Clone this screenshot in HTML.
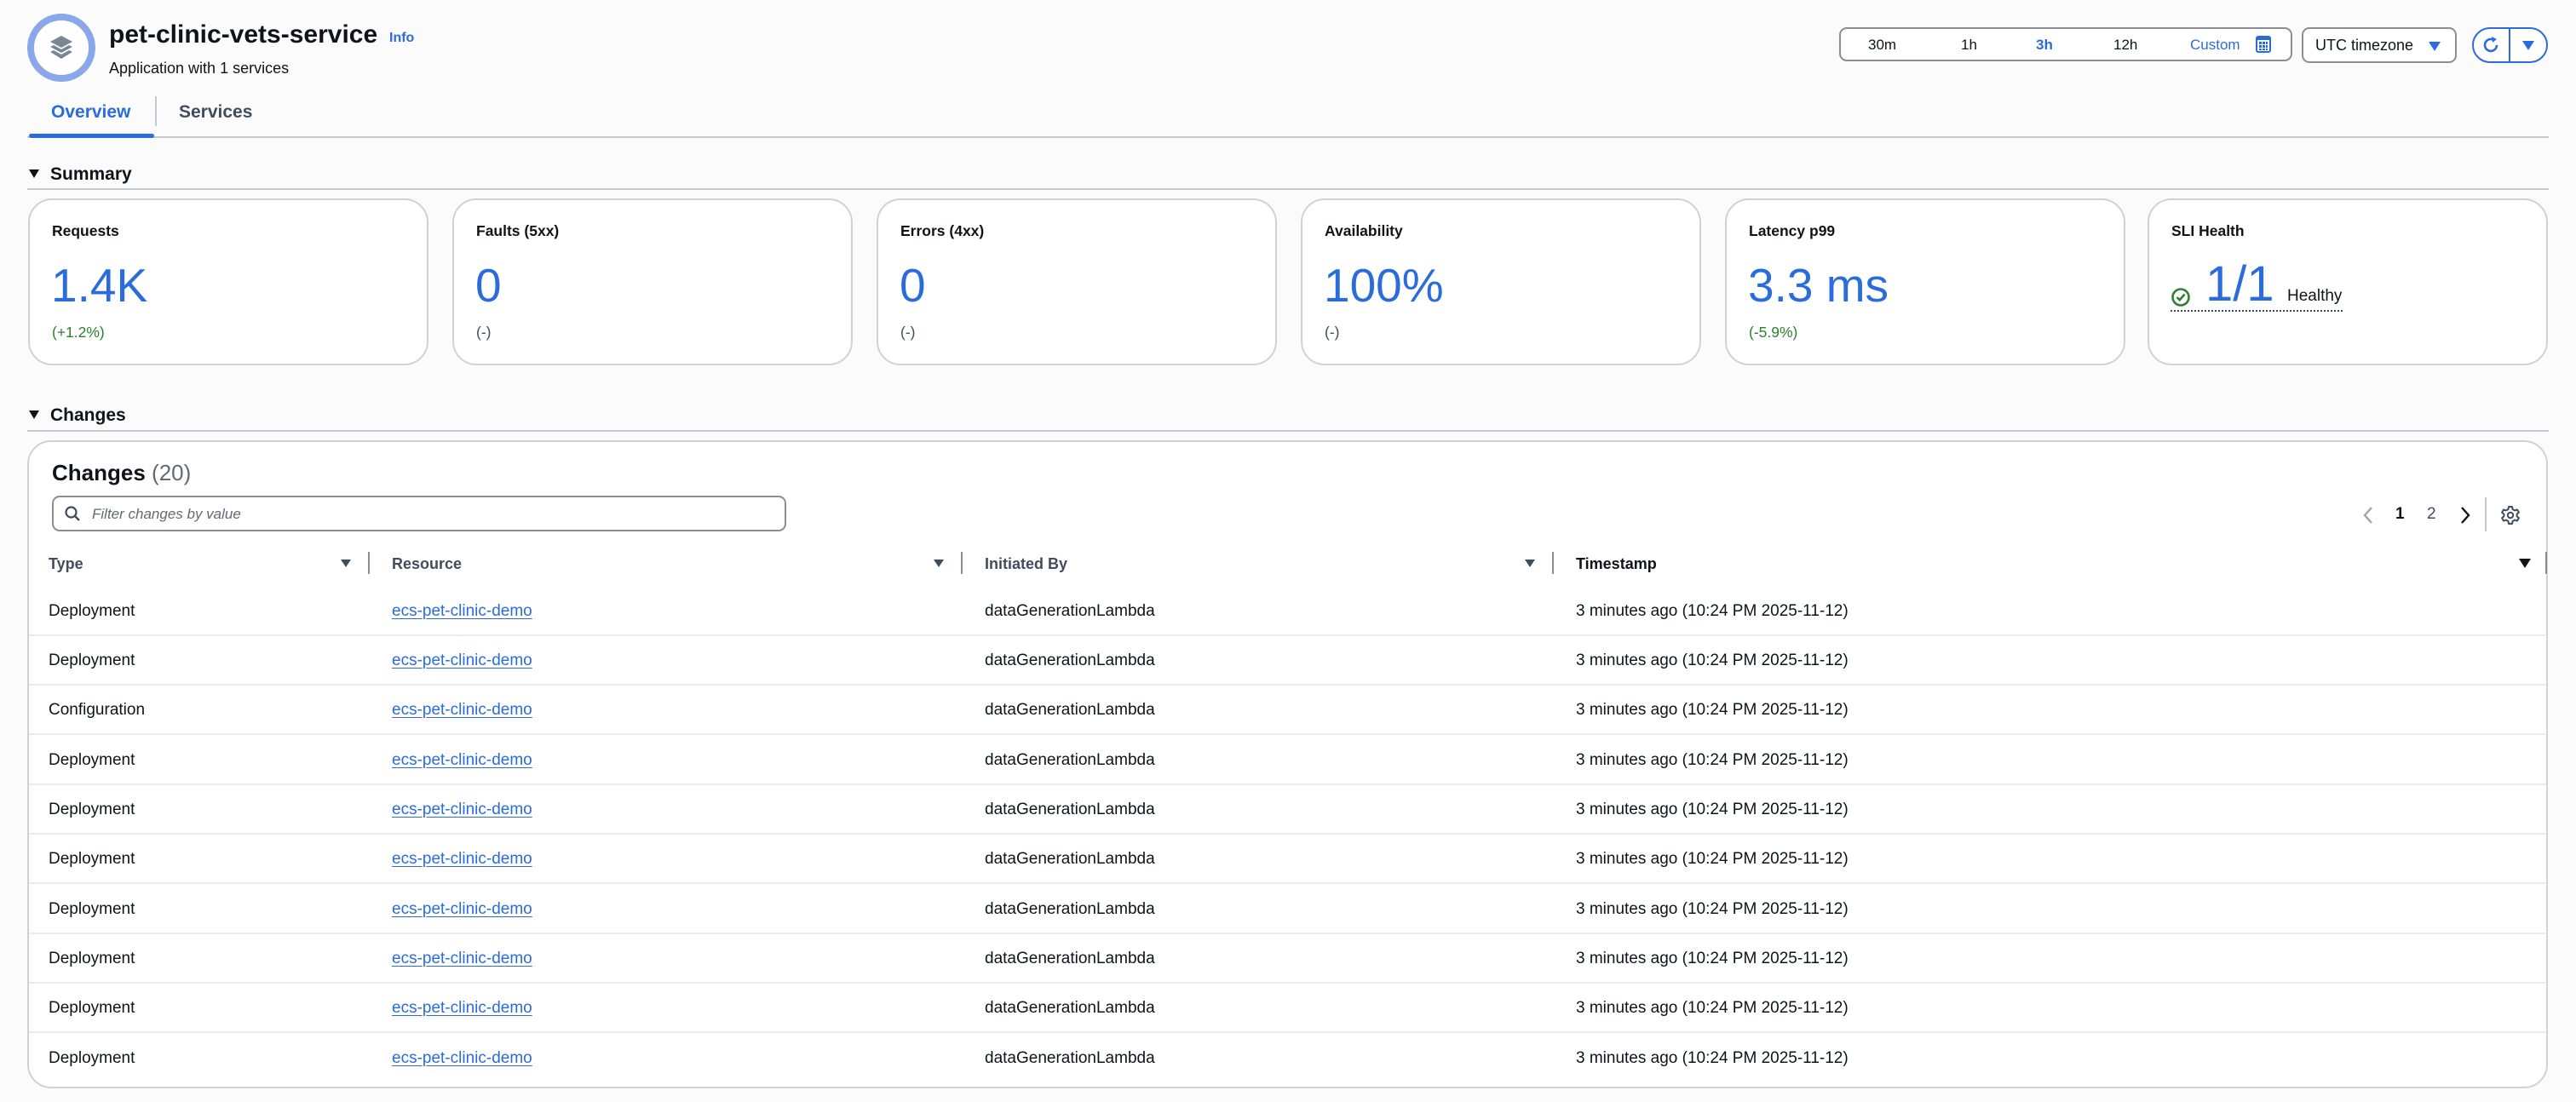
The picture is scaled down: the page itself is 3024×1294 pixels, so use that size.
<!DOCTYPE html>
<html><head><meta charset="utf-8"><style>
*{box-sizing:border-box;margin:0;padding:0}
body{width:3024px;height:1294px;background:#fbfbfb;font-family:"Liberation Sans",sans-serif;color:#0f141a;position:relative;overflow:hidden}
.a{position:absolute;white-space:nowrap}
.card{position:absolute;top:233px;width:470px;height:196px;background:#fff;border:2px solid #d0d2d8;border-radius:28px}
.card .l{position:absolute;left:26px;top:26px;font-size:17.5px;font-weight:bold}
.card .v{position:absolute;left:25px;top:67px;font-size:55px;color:#2a6cdb;line-height:1.2}
.card .s{position:absolute;left:26px;top:145px;font-size:17.5px;color:#414d5c}
.g{color:#2e8031!important}
.row{position:absolute;left:34px;width:2955px;height:58px;border-bottom:2px solid #e9ebed;font-size:19px}
.row span{position:absolute;top:18px}
.lnk{color:#2a6cdb;text-decoration:underline;text-underline-offset:3px}
.th{position:absolute;top:652px;font-size:18px;font-weight:bold;color:#414d5c}
.tri{position:absolute;width:0;height:0;border-left:6px solid transparent;border-right:6px solid transparent;border-top:9px solid #414d5c}
.div{position:absolute;width:2px;background:#8c8c94}
</style></head><body>
<div class="a" style="left:32px;top:16px;width:80px;height:80px;border-radius:50%;border:8px solid #88a8ea;background:#fff"></div>
<svg class="a" style="left:56px;top:40px" width="32" height="32" viewBox="0 0 32 32"><path d="M16 2 L29 9 L16 16 L3 9 Z" fill="#7b8694"/><path d="M3 15 L7 13 L16 18 L25 13 L29 15 L16 22 Z" fill="#7b8694"/><path d="M3 21 L7 19 L16 24 L25 19 L29 21 L16 29 Z" fill="#7b8694"/></svg>
<div class="a" style="left:128px;top:24px;font-size:30px;font-weight:bold">pet-clinic-vets-service</div>
<div class="a" style="left:457px;top:36px;font-size:16px;font-weight:bold;color:#2a6cdb">Info</div>
<div class="a" style="left:128px;top:70px;font-size:18px">Application with 1 services</div>
<div class="a" style="left:60px;top:120px;font-size:21px;font-weight:bold;color:#2a6cdb">Overview</div>
<div class="a" style="left:210px;top:120px;font-size:21px;font-weight:bold;color:#414d5c">Services</div>
<div class="a" style="left:182px;top:113px;width:2px;height:35px;background:#c6c6cd"></div>
<div class="a" style="left:32px;top:160px;width:2960px;height:2px;background:#c6c6cd"></div>
<div class="a" style="left:34px;top:157px;width:147px;height:5px;border-radius:3px;background:#2a6cdb"></div>
<div class="a" style="left:2159px;top:32px;width:532px;height:40px;border:2px solid #8c8c94;border-radius:9px;background:#fff"></div>
<div class="a" style="left:2193px;top:43px;font-size:17px">30m</div>
<div class="a" style="left:2302px;top:43px;font-size:17px">1h</div>
<div class="a" style="left:2390px;top:43px;font-size:17px;font-weight:bold;color:#2a6cdb">3h</div>
<div class="a" style="left:2481px;top:43px;font-size:17px">12h</div>
<div class="a" style="left:2571px;top:43px;font-size:17px;color:#2a6cdb">Custom</div>
<svg class="a" style="left:2648px;top:42px" width="18" height="20" viewBox="0 0 18 20"><rect x="1" y="1" width="16" height="18" rx="2" fill="none" stroke="#2a6cdb" stroke-width="2"/><rect x="1" y="1" width="16" height="4" fill="#2a6cdb"/><g fill="#2a6cdb"><rect x="4" y="7" width="3" height="3"/><rect x="8" y="7" width="3" height="3"/><rect x="12" y="7" width="2" height="3"/><rect x="4" y="11" width="3" height="3"/><rect x="8" y="11" width="3" height="3"/><rect x="12" y="11" width="2" height="3"/><rect x="4" y="15" width="3" height="2"/><rect x="8" y="15" width="3" height="2"/><rect x="12" y="15" width="2" height="2"/></g></svg>
<div class="a" style="left:2702px;top:32px;width:182px;height:42px;border:2px solid #8c8c94;border-radius:9px;background:#fff"></div>
<div class="a" style="left:2718px;top:43px;font-size:18px">UTC timezone</div>
<div class="a" style="left:2851px;top:49px;width:0;height:0;border-left:7px solid transparent;border-right:7px solid transparent;border-top:11px solid #2a6cdb"></div>
<div class="a" style="left:2902px;top:32px;width:89px;height:42px;border:2px solid #2a6cdb;border-radius:21px;background:#fff"></div>
<div class="a" style="left:2945px;top:33px;width:2px;height:40px;background:#2a6cdb"></div>
<svg class="a" style="left:2912px;top:41px" width="24" height="24" viewBox="0 0 24 24"><path d="M19 12 A7 7 0 1 1 15 5.6" fill="none" stroke="#2a6cdb" stroke-width="2.6"/><path d="M13 2 L19 5 L14 9 Z" fill="#2a6cdb"/></svg>
<div class="a" style="left:2961px;top:48px;width:0;height:0;border-left:7px solid transparent;border-right:7px solid transparent;border-top:11px solid #2a6cdb"></div>
<div class="a" style="left:34px;top:199px;width:0;height:0;border-left:6px solid transparent;border-right:6px solid transparent;border-top:10px solid #0f141a"></div>
<div class="a" style="left:59px;top:193px;font-size:21px;font-weight:bold">Summary</div>
<div class="a" style="left:32px;top:221px;width:2960px;height:2px;background:#c6c6cd"></div>
<div class="card" style="left:33px"><div class="l">Requests</div><div class="v">1.4K</div><div class="s g">(+1.2%)</div></div>
<div class="card" style="left:531px"><div class="l">Faults (5xx)</div><div class="v">0</div><div class="s">(-)</div></div>
<div class="card" style="left:1029px"><div class="l">Errors (4xx)</div><div class="v">0</div><div class="s">(-)</div></div>
<div class="card" style="left:1527px"><div class="l">Availability</div><div class="v">100%</div><div class="s">(-)</div></div>
<div class="card" style="left:2025px"><div class="l">Latency p99</div><div class="v">3.3 ms</div><div class="s g">(-5.9%)</div></div>
<div class="card" style="left:2521px"><div class="l">SLI Health</div>
<svg class="a" style="left:25px;top:102px" width="24" height="24" viewBox="0 0 24 24"><circle cx="12" cy="12" r="9.5" fill="none" stroke="#2e8031" stroke-width="2.6"/><path d="M7.5 12 L10.8 15.2 L16.5 8.5" fill="none" stroke="#2e8031" stroke-width="2.6"/></svg>
<div class="a" style="left:66px;top:64px;font-size:58px;color:#2a6cdb;line-height:1.2">1/1</div>
<div class="a" style="left:162px;top:102px;font-size:19px">Healthy</div>
<div class="a" style="left:25px;top:129px;width:202px;border-top:2px dotted #414d5c"></div>
</div>
<div class="a" style="left:34px;top:482px;width:0;height:0;border-left:6px solid transparent;border-right:6px solid transparent;border-top:10px solid #0f141a"></div>
<div class="a" style="left:59px;top:476px;font-size:21px;font-weight:bold">Changes</div>
<div class="a" style="left:32px;top:505px;width:2960px;height:2px;background:#c6c6cd"></div>
<div class="a" style="left:32px;top:517px;width:2959px;height:761px;background:#fff;border:2px solid #d0d2d8;border-radius:28px"></div>
<div class="a" style="left:61px;top:540px;font-size:26px;font-weight:bold">Changes <span style="font-weight:normal;color:#656871">(20)</span></div>
<div class="a" style="left:61px;top:582px;width:862px;height:42px;border:2px solid #8c8c94;border-radius:9px;background:#fff"></div>
<svg class="a" style="left:75px;top:593px" width="20" height="20" viewBox="0 0 20 20"><circle cx="8.5" cy="8.5" r="6" fill="none" stroke="#414d5c" stroke-width="2.2"/><path d="M13 13 L18 18" stroke="#414d5c" stroke-width="2.4"/></svg>
<div class="a" style="left:108px;top:594px;font-size:17px;font-style:italic;color:#656871">Filter changes by value</div>
<svg class="a" style="left:2772px;top:593px" width="16" height="24" viewBox="0 0 16 24"><path d="M12 3 L4 12 L12 21" fill="none" stroke="#a0a3aa" stroke-width="2.4"/></svg>
<div class="a" style="left:2812px;top:593px;font-size:19px;font-weight:bold">1</div>
<div class="a" style="left:2849px;top:593px;font-size:19px;color:#414d5c">2</div>
<svg class="a" style="left:2886px;top:593px" width="16" height="24" viewBox="0 0 16 24"><path d="M4 3 L12 12 L4 21" fill="none" stroke="#0f141a" stroke-width="2.4"/></svg>
<div class="a" style="left:2917px;top:584px;width:2px;height:40px;background:#c6c6cd"></div>
<svg class="a" style="left:2935px;top:592px" width="24" height="26" viewBox="0 0 24 24"><path d="M10 2h4l.6 3 2.4 1.4 2.9-1 2 3.4-2.3 2v2.4l2.3 2-2 3.4-2.9-1-2.4 1.4L14 22h-4l-.6-3-2.4-1.4-2.9 1-2-3.4 2.3-2v-2.4l-2.3-2 2-3.4 2.9 1L9.4 5z" fill="none" stroke="#414d5c" stroke-width="2" stroke-linejoin="round"/><circle cx="12" cy="12" r="3.2" fill="none" stroke="#414d5c" stroke-width="2"/></svg>
<div class="th" style="left:57px">Type</div>
<div class="tri" style="left:400px;top:657px"></div>
<div class="div" style="left:432px;top:648px;height:26px"></div>
<div class="th" style="left:460px">Resource</div>
<div class="tri" style="left:1096px;top:657px"></div>
<div class="div" style="left:1128px;top:648px;height:26px"></div>
<div class="th" style="left:1156px">Initiated By</div>
<div class="tri" style="left:1790px;top:657px"></div>
<div class="div" style="left:1822px;top:648px;height:26px"></div>
<div class="th" style="left:1850px;color:#0f141a">Timestamp</div>
<div class="tri" style="left:2957px;top:656px;border-left-width:7px;border-right-width:7px;border-top:11px solid #0f141a"></div>
<div class="div" style="left:2988px;top:648px;height:26px"></div>
<div class="row" style="top:689px"><span style="left:23px">Deployment</span><span class="lnk" style="left:426px">ecs-pet-clinic-demo</span><span style="left:1122px">dataGenerationLambda</span><span style="left:1816px">3 minutes ago (10:24 PM 2025-11-12)</span></div>
<div class="row" style="top:747px"><span style="left:23px">Deployment</span><span class="lnk" style="left:426px">ecs-pet-clinic-demo</span><span style="left:1122px">dataGenerationLambda</span><span style="left:1816px">3 minutes ago (10:24 PM 2025-11-12)</span></div>
<div class="row" style="top:805px"><span style="left:23px">Configuration</span><span class="lnk" style="left:426px">ecs-pet-clinic-demo</span><span style="left:1122px">dataGenerationLambda</span><span style="left:1816px">3 minutes ago (10:24 PM 2025-11-12)</span></div>
<div class="row" style="top:864px"><span style="left:23px">Deployment</span><span class="lnk" style="left:426px">ecs-pet-clinic-demo</span><span style="left:1122px">dataGenerationLambda</span><span style="left:1816px">3 minutes ago (10:24 PM 2025-11-12)</span></div>
<div class="row" style="top:922px"><span style="left:23px">Deployment</span><span class="lnk" style="left:426px">ecs-pet-clinic-demo</span><span style="left:1122px">dataGenerationLambda</span><span style="left:1816px">3 minutes ago (10:24 PM 2025-11-12)</span></div>
<div class="row" style="top:980px"><span style="left:23px">Deployment</span><span class="lnk" style="left:426px">ecs-pet-clinic-demo</span><span style="left:1122px">dataGenerationLambda</span><span style="left:1816px">3 minutes ago (10:24 PM 2025-11-12)</span></div>
<div class="row" style="top:1039px"><span style="left:23px">Deployment</span><span class="lnk" style="left:426px">ecs-pet-clinic-demo</span><span style="left:1122px">dataGenerationLambda</span><span style="left:1816px">3 minutes ago (10:24 PM 2025-11-12)</span></div>
<div class="row" style="top:1097px"><span style="left:23px">Deployment</span><span class="lnk" style="left:426px">ecs-pet-clinic-demo</span><span style="left:1122px">dataGenerationLambda</span><span style="left:1816px">3 minutes ago (10:24 PM 2025-11-12)</span></div>
<div class="row" style="top:1155px"><span style="left:23px">Deployment</span><span class="lnk" style="left:426px">ecs-pet-clinic-demo</span><span style="left:1122px">dataGenerationLambda</span><span style="left:1816px">3 minutes ago (10:24 PM 2025-11-12)</span></div>
<div class="row" style="top:1214px;border-bottom:none"><span style="left:23px">Deployment</span><span class="lnk" style="left:426px">ecs-pet-clinic-demo</span><span style="left:1122px">dataGenerationLambda</span><span style="left:1816px">3 minutes ago (10:24 PM 2025-11-12)</span></div>
</body></html>
